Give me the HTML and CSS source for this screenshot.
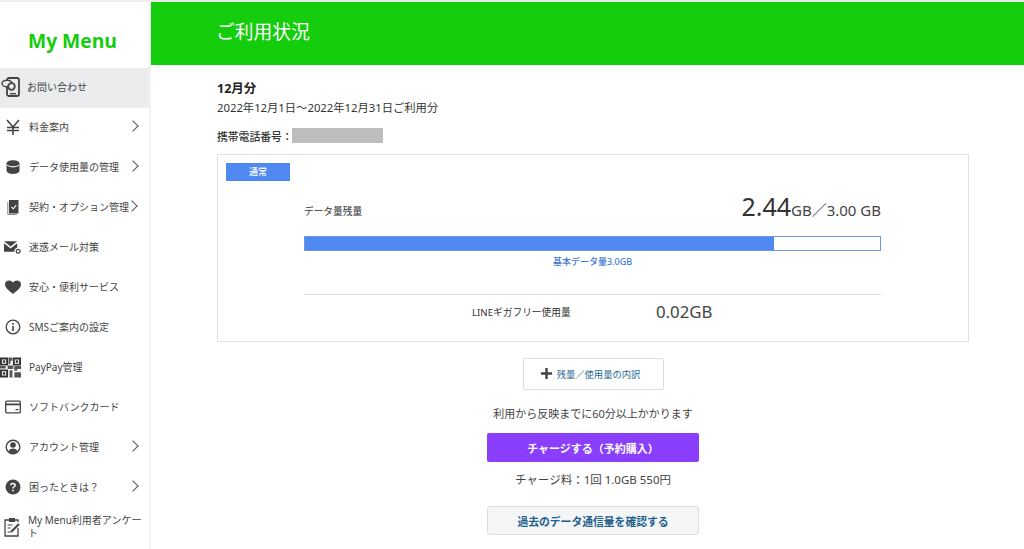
FILE: index.html
```
<!DOCTYPE html>
<html lang="ja">
<head>
<meta charset="utf-8">
<title>ご利用状況</title>
<link rel="stylesheet" href="styles.css">
</head>
<body>
<div class="page">
  <aside class="sidebar">
    <div class="logo">My Menu</div>
    <nav class="menu">
      <a class="item active"><span class="ic ic-left"><svg viewBox="0 0 20 20" width="20" height="20"><rect x="6" y="1" width="12" height="18" rx="2" fill="#ebecee" stroke="#444" stroke-width="1.800"/><rect x="9" y="16" width="6" height="1.400" fill="#444"/><ellipse cx="6" cy="6.500" rx="5" ry="3.300" fill="#ebecee" stroke="#444" stroke-width="1.400"/><circle cx="10.500" cy="9.500" r="3.300" fill="#ebecee" stroke="#444" stroke-width="1.800"/></svg></span><span class="lb lb-near">お問い合わせ</span></a>
      <a class="item"><span class="ic"><svg viewBox="0 0 16 16" width="16" height="16"><path d="M2 1l6 7 6-7M8 8v8M2 8.500h12M2 11.500h12" fill="none" stroke="#444" stroke-width="1.600"/></svg></span><span class="lb">料金案内</span><span class="chev"></span></a>
      <a class="item"><span class="ic"><svg viewBox="0 0 16 16" width="16" height="16"><path d="M1.500 4.500c0-4.500 13-4.500 13 0v7c0 4.500-13 4.500-13 0z" fill="#444"/><path d="M2 6.200c2.500 2.200 9.500 2.200 12 0" fill="none" stroke="#fff" stroke-width="1.100"/></svg></span><span class="lb">データ使用量の管理</span><span class="chev"></span></a>
      <a class="item"><span class="ic"><svg viewBox="0 0 16 16" width="16" height="16"><path d="M4 1h9.500v13.500H4z" fill="#444"/><path d="M2.800 3v12.500h9" fill="none" stroke="#888" stroke-width="1"/><path d="M6.500 8l1.800 1.800 3-3.600" fill="none" stroke="#fff" stroke-width="1.100"/></svg></span><span class="lb">契約・オプション管理</span><span class="chev chev-near"></span></a>
      <a class="item"><span class="ic"><svg viewBox="0 0 18 16" width="18" height="16"><path d="M0 2h14L7 7.500z" fill="#444"/><path d="M0 4l7 5.500L14 4v4.500a4.500 4.500 0 0 0-3 4.500H0z" fill="#444"/><circle cx="15" cy="12.500" r="2" fill="none" stroke="#444" stroke-width="1.300"/></svg></span><span class="lb">迷惑メール対策</span></a>
      <a class="item"><span class="ic"><svg viewBox="0 0 16 16" width="16" height="16"><path d="M8 15C3 11 0 8.500 0 5.200 0 2.800 2 1.500 4 1.500c1.700 0 3.200.8 4 2.300.8-1.500 2.300-2.300 4-2.300 2 0 4 1.300 4 3.700C16 8.500 13 11 8 15z" fill="#444"/></svg></span><span class="lb">安心・便利サービス</span></a>
      <a class="item"><span class="ic"><svg viewBox="0 0 16 16" width="16" height="16"><circle cx="8" cy="8" r="6.800" fill="none" stroke="#444" stroke-width="1.300"/><rect x="7.200" y="7" width="1.600" height="5" fill="#444"/><rect x="7.200" y="4" width="1.600" height="1.700" fill="#444"/></svg></span><span class="lb">SMSご案内の設定</span></a>
      <a class="item"><span class="ic ic-left"><svg viewBox="0 0 22 21" width="22" height="21"><path d="M1 1h6.500v6.500H1zM14.500 1H21v6.500h-6.500zM1 13.500h6.500V20H1z" fill="none" stroke="#333" stroke-width="2"/><path d="M9 0h4v3.500h-2V7H9zM8 8.500h6V12H8zM15 9h7v3h-4v2h-3zM10 13.500h3V21h-3zM15 15.500h7V21h-7zM0 9h6v2.500H0zM16.500 17h3v2h-3z" fill="#555"/><rect x="3" y="3" width="2.500" height="2.500" fill="#333"/><rect x="16.500" y="3" width="2.500" height="2.500" fill="#333"/><rect x="3" y="15.500" width="2.500" height="2.500" fill="#333"/></svg></span><span class="lb">PayPay管理</span></a>
      <a class="item"><span class="ic"><svg viewBox="0 0 16 14" width="16" height="14"><rect x=".7" y="1.200" width="14.600" height="11.600" rx="1" fill="none" stroke="#444" stroke-width="1.300"/><rect x="1" y="3.500" width="14" height="1.800" fill="#444"/><rect x="10.500" y="9" width="3" height="1.200" fill="#444"/></svg></span><span class="lb">ソフトバンクカード</span></a>
      <a class="item"><span class="ic"><svg viewBox="0 0 16 16" width="16" height="16"><circle cx="8" cy="8" r="6.800" fill="none" stroke="#444" stroke-width="1.400"/><circle cx="8" cy="6" r="2.800" fill="#444"/><path d="M3.500 12.500c.6-4 8.400-4 9 0-2 2.200-7 2.200-9 0z" fill="#444"/></svg></span><span class="lb">アカウント管理</span><span class="chev"></span></a>
      <a class="item"><span class="ic"><svg viewBox="0 0 16 16" width="16" height="16"><circle cx="8" cy="8" r="7.500" fill="#444"/><path d="M5.800 6.200C5.800 3.800 10.200 3.800 10.200 6.200 10.200 7.800 8 7.700 8 9.500" fill="none" stroke="#fff" stroke-width="1.500"/><rect x="7.200" y="10.700" width="1.600" height="1.600" fill="#fff"/></svg></span><span class="lb">困ったときは？</span><span class="chev"></span></a>
      <a class="item item-wrap"><span class="ic"><svg viewBox="0 0 17 20" width="17" height="20"><path d="M5 3H1v16h13v-8M11 3h3v2" fill="none" stroke="#444" stroke-width="1.300"/><path d="M5 1h6v4H5z" fill="#444"/><path d="M3.500 8h5M3.500 11h3M3.500 15h3" stroke="#444" stroke-width="1.100"/><path d="M7 15l8-8" stroke="#444" stroke-width="2.200"/></svg></span><span class="lb lb-wrap">My Menu利用者アンケート</span></a>
    </nav>
  </aside>
  <main class="main">
    <header class="banner"><h1 class="banner-title">ご利用状況</h1></header>
    <div class="content">
      <h2 class="month">12月分</h2>
      <p class="period">2022年12月1日～2022年12月31日ご利用分</p>
      <div class="phone"><span class="phone-label">携帯電話番号：</span><span class="mask"></span></div>
      <section class="card">
        <div class="tag">通常</div>
        <div class="card-body">
          <div class="remain">
            <span class="remain-label">データ量残量</span>
            <span class="remain-value"><span class="big">2.44</span>GB／3.00 GB</span>
          </div>
          <div class="bar"><div class="bar-fill" style="width:81.600%"></div></div>
          <div class="bar-caption">基本データ量3.0GB</div>
          <div class="free">
            <span class="free-label">LINEギガフリー使用量</span>
            <span class="free-value">0.02GB</span>
          </div>
        </div>
      </section>
      <div class="actions">
        <a class="detail-btn"><svg class="plus" viewBox="0 0 11 11" width="11" height="11"><path d="M4.300 0h2.400v4.300H11v2.400H6.700V11H4.300V6.700H0V4.300h4.300z" fill="#444"/></svg>残量／使用量の内訳</a>
        <p class="note">利用から反映までに60分以上かかります</p>
        <a class="charge-btn">チャージする（予約購入）</a>
        <p class="fee">チャージ料：1回 1.0GB 550円</p>
        <a class="past-btn">過去のデータ通信量を確認する</a>
      </div>
    </div>
  </main>
</div>
</body>
</html>
```
FILE: styles.css
```
* { box-sizing: border-box; }
html, body { margin: 0; height: 100%; overflow: hidden; background: #fff; }
body { font-family: "Noto Sans", "Noto Sans CJK JP", sans-serif; color: #333; font-size: 11px; }
.page { display: flex; height: 549px; border-top: 2px solid #eee; }
.sidebar { width: 151px; flex: none; border-right: 2px solid #f2f2f2; }
.logo { height: 66px; padding-top: 25px; text-align: center; color: #14cd0c; font-size: 19.300px; font-weight: 700; line-height: 27px; font-family: "Open Sans", "Noto Sans", sans-serif; padding-right: 4px; }
.menu { display: flex; flex-direction: column; }
.item { display: flex; align-items: center; height: 40px; padding-left: 4px; padding-bottom: 2px; color: #444; position: relative; }
.item.active { background: #ebecee; }
.ic { width: 17px; flex: none; display: flex; justify-content: center; }
.ic-left { margin-left: -4px; width: 21px; }
.lb { margin-left: 8px; font-size: 10px; white-space: nowrap; padding-bottom: 2px; }
.lb-near { margin-left: 6px; }
.lb-wrap { white-space: normal; line-height: 13px; width: 114px; margin-left: 7px; padding-bottom: 0; }
.item-wrap { height: 39px; }
.chev { position: absolute; right: 12px; top: 14px; width: 8px; height: 8px; border-top: 1.300px solid #555; border-right: 1.300px solid #555; transform: rotate(45deg); }
.chev-near { right: 13px; }
.main { flex: 1; min-width: 0; }
.banner { height: 63px; background: #14cd0c; padding-left: 65px; padding-bottom: 6px; display: flex; align-items: center; }
.banner-title { margin: 0; color: #fff; font-size: 18.800px; font-weight: 400; }
.content { padding: 14px 0 0 66px; width: 818px; }
.month { margin: 0; font-size: 12.500px; font-weight: 700; line-height: 20px; color: #222; }
.period { margin: 0; font-size: 11.300px; line-height: 18px; height: 19px; white-space: nowrap; }
.phone { display: flex; align-items: center; margin-top: 10px; height: 15px; font-size: 10.800px; }
.phone-label { font-weight: 500; width: 75px; white-space: nowrap; }
.mask { width: 91px; height: 15px; background: #bdbdbd; }
.card { margin-top: 11px; height: 188px; border: 1px solid #e3e3e3; padding: 8px; }
.tag { width: 64px; height: 18px; background: #4f88ee; color: #fff; text-align: center; font-size: 9px; line-height: 17px; font-weight: 500; }
.card-body { padding-top: 8px; width: 577px; margin-left: 78px; }
.remain { display: flex; justify-content: space-between; align-items: baseline; height: 40px; }
.remain-label { font-size: 9.700px; position: relative; top: -1px; }
.remain-value { font-size: 15px; color: #444; }
.big { font-size: 25px; color: #333; }
.bar { margin-top: 7px; height: 15px; border: 1px solid #6e97e0; }
.bar-fill { height: 100%; background: #4f88ee; }
.bar-caption { text-align: center; color: #3f78d8; font-size: 9px; line-height: 13px; margin-top: 4px; font-weight: 500; }
.free { margin-top: 26px; border-top: 1px solid #ddd; height: 34px; display: flex; align-items: center; padding-left: 168px; }
.free-label { font-size: 9.700px; width: 184px; white-space: nowrap; }
.free-value { font-size: 16.800px; color: #444; }
.actions { display: flex; flex-direction: column; align-items: center; margin-top: 16px; }
.detail-btn { width: 141px; height: 32px; border: 1px solid #ddd; border-radius: 2px; display: flex; align-items: center; justify-content: center; color: #1f6b94; font-size: 9.300px; padding: 0 5px 1px 0; }
.plus { margin-right: 5px; }
.note { margin: 15px 0 0; font-size: 11px; line-height: 18px; color: #444; }
.charge-btn { margin-top: 10px; width: 212px; height: 29px; background: #8a3ffc; color: #fff; border-radius: 2px; display: flex; align-items: center; justify-content: center; font-size: 11px; font-weight: 700; }
.fee { margin: 9px 0 0; font-size: 11.500px; line-height: 18px; color: #444; }
.past-btn { margin-top: 17px; width: 212px; height: 29px; background: #f3f5f7; border: 1px solid #ddd; border-radius: 3px; display: flex; align-items: center; justify-content: center; color: #1f5f8b; font-size: 10.800px; font-weight: 700; }
```
